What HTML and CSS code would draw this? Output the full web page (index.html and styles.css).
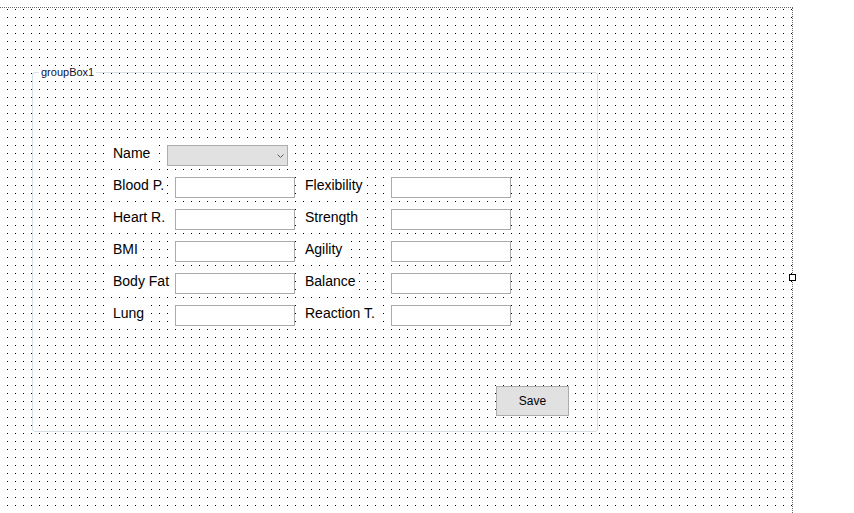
FILE: index.html
```html
<!DOCTYPE html>
<html lang="en">
<head>
<meta charset="utf-8">
<title>Form Designer</title>
<link rel="stylesheet" href="styles.css">
</head>
<body>
<div class="surface">
  <div class="groupbox">
    <span class="caption">groupBox1</span>
    <div class="name-row">
      <span class="lbl">Name</span>
      <div class="combo">
        <svg class="chev" width="7" height="4" viewBox="0 0 7 4"><polyline points="0.5,0.5 3.5,3.5 6.5,0.5" fill="none" stroke="#5a5a5a" stroke-width="1"/></svg>
      </div>
    </div>
    <div class="grid">
      <span class="lbl">Blood P.</span><span class="tb"></span><span class="lbl lbl2">Flexibility</span><span class="tb"></span>
      <span class="lbl">Heart R.</span><span class="tb"></span><span class="lbl lbl2">Strength</span><span class="tb"></span>
      <span class="lbl">BMI</span><span class="tb"></span><span class="lbl lbl2">Agility</span><span class="tb"></span>
      <span class="lbl">Body Fat</span><span class="tb"></span><span class="lbl lbl2">Balance</span><span class="tb"></span>
      <span class="lbl">Lung</span><span class="tb"></span><span class="lbl lbl2">Reaction T.</span><span class="tb"></span>
    </div>
    <div class="actions"><button class="btn" type="button">Save</button></div>
  </div>
  <span class="handle"></span>
</div>
</body>
</html>
```

FILE: styles.css
```css
html, body {
  margin: 0;
  padding: 0;
  background: #fff;
}
body {
  width: 854px;
  height: 513px;
  overflow: hidden;
  font-family: "Liberation Sans", Arial, sans-serif;
  color: #000;
}
.surface {
  position: relative;
  margin-top: 7px;
  width: 792px;
  height: 505px;
  border-top: 1px dotted #6a6a6a;
  border-right: 1px dotted #6a6a6a;
  background-color: #fff;
  background-image:
    linear-gradient(90deg, #fff 7px, transparent 7px),
    linear-gradient(#fff 7px, #000 7px);
  background-size: 8px 8px;
  background-position: 0 2px;
  display: flow-root;
}
.groupbox {
  position: relative;
  box-sizing: border-box;
  margin: 64px 0 0 32px;
  width: 566px;
  height: 360px;
  border: 1px solid #d5dfe5;
  border-radius: 3px;
  padding: 72px 0 0 77px;
}
.caption {
  position: absolute;
  top: -7px;
  left: 6px;
  padding: 0 2px;
  font-size: 11px;
  line-height: 13px;
  background: #fff;
  color: #101030;
}
.name-row {
  display: grid;
  grid-template-columns: 57px 121px;
  height: 21px;
}
.lbl {
  justify-self: start;
  align-self: start;
  box-sizing: border-box;
  height: 21px;
  padding: 0 3px 0 3px;
  font-size: 14px;
  line-height: 16px;
  background: #fff;
  white-space: nowrap;
}
.lbl2 {
  margin-left: 7px;
}
.combo {
  box-sizing: border-box;
  height: 21px;
  background: #e1e1e1;
  border: 1px solid #adadad;
  display: flex;
  align-items: center;
  justify-content: flex-end;
  padding-right: 3px;
}
.chev {
  display: block;
}
.grid {
  margin-top: 11px;
  display: grid;
  grid-template-columns: 65px 120px 96px 120px;
  grid-auto-rows: 21px;
  row-gap: 11px;
}
.tb {
  box-sizing: border-box;
  height: 21px;
  background: #fff;
  border: 1px solid #ababab;
}
.actions {
  display: flex;
  justify-content: flex-end;
  margin-top: 60px;
  padding-right: 28px;
}
.btn {
  box-sizing: border-box;
  width: 73px;
  height: 30px;
  padding: 0;
  margin: 0;
  background: #e1e1e1;
  border: 1px solid #adadad;
  border-radius: 0;
  font-family: "Liberation Sans", Arial, sans-serif;
  font-size: 12px;
  color: #000;
}
.handle {
  position: absolute;
  left: 789px;
  top: 266px;
  box-sizing: border-box;
  width: 7px;
  height: 7px;
  border: 1px solid #000;
  background: #fff;
}
```
